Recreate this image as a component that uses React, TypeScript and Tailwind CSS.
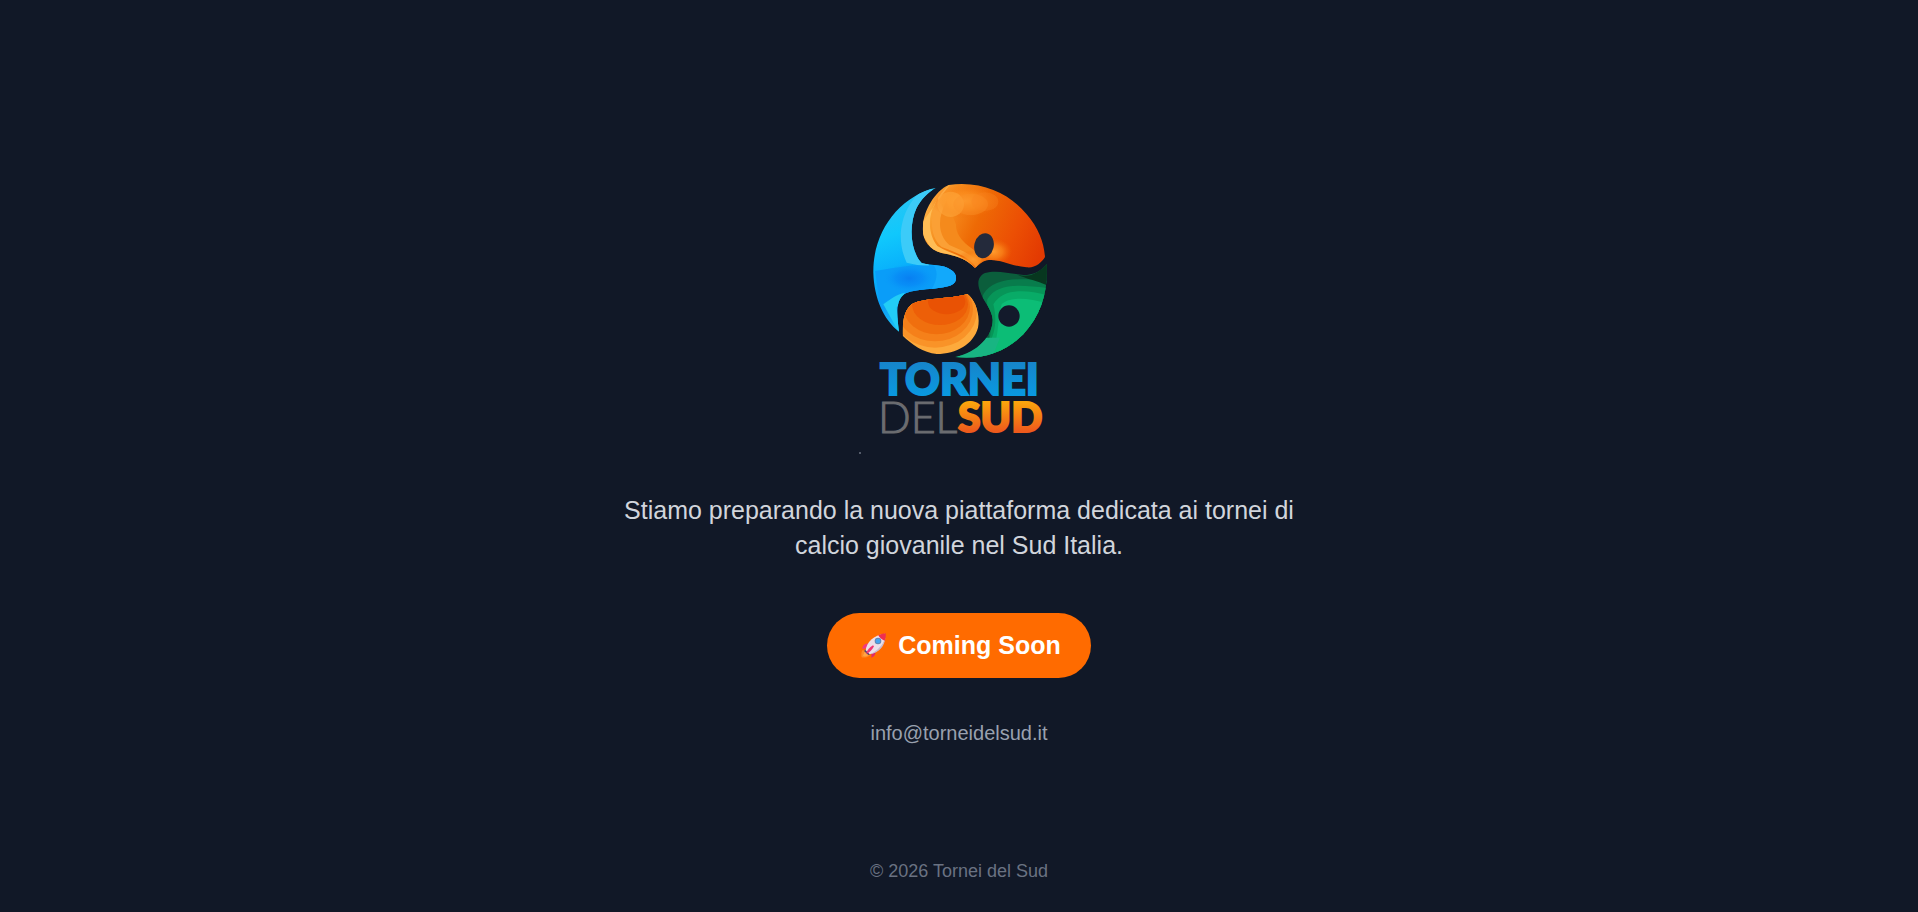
function Logo() {
  return (
    <svg
      role="img"
      aria-label="Tornei del Sud"
      viewBox="0 0 200 290"
      className="h-[290px] w-[200px]"
    >
      <defs>
        <linearGradient id="sky" x1="0.1" y1="0" x2="0.3" y2="1">
          <stop offset="0" stopColor="#35c3f0" />
          <stop offset="0.35" stopColor="#10c8fc" />
          <stop offset="0.6" stopColor="#08aefb" />
          <stop offset="0.8" stopColor="#0c9df5" />
          <stop offset="1" stopColor="#20c8f4" />
        </linearGradient>
        <linearGradient id="sunset" x1="0" y1="0.3" x2="1" y2="0.6">
          <stop offset="0" stopColor="#fdb44a" />
          <stop offset="0.2" stopColor="#f7901f" />
          <stop offset="0.45" stopColor="#ee6a05" />
          <stop offset="0.75" stopColor="#ec4f04" />
          <stop offset="1" stopColor="#e33a02" />
        </linearGradient>
        <radialGradient id="glow">
          <stop offset="0" stopColor="#ff9c2e" />
          <stop offset="0.5" stopColor="#fb8a1c" stopOpacity="0.7" />
          <stop offset="1" stopColor="#f06a08" stopOpacity="0" />
        </radialGradient>
        <radialGradient id="water">
          <stop offset="0" stopColor="#087ff2" />
          <stop offset="0.5" stopColor="#088bf6" stopOpacity="0.8" />
          <stop offset="1" stopColor="#0a9cf8" stopOpacity="0" />
        </radialGradient>
        <linearGradient id="bluetext" x1="0" y1="0" x2="0" y2="1">
          <stop offset="0" stopColor="#1a7fc4" />
          <stop offset="1" stopColor="#069ee6" />
        </linearGradient>
        <linearGradient id="orangetext" x1="0" y1="0" x2="0" y2="1">
          <stop offset="0.2" stopColor="#fba60c" />
          <stop offset="0.8" stopColor="#ee5a1c" />
        </linearGradient>
        <clipPath id="blueShape">
          <path d="M258 50C150 75 68 180 70 305C72 380 100 445 147 482C140 430 138 390 160 372C180 352 250 358 300 344C326 336 322 305 302 296C280 280 250 285 215 276C180 240 176 160 200 110C213 85 235 62 258 50Z" />
        </clipPath>
        <clipPath id="topShape">
          <path d="M296 42C400 28 480 70 530 130C565 170 582 215 585 258C575 275 555 292 530 289C480 285 450 262 410 268C395 272 385 282 375 292C350 262 310 252 275 246C235 235 215 205 219 165C220 120 255 60 296 42Z" />
        </clipPath>
        <clipPath id="greenShape">
          <path d="M590 278C575 300 550 312 520 312C480 308 440 296 405 306C385 315 380 335 390 360C398 390 425 410 428 445C430 490 385 545 315 558C400 568 470 540 520 490C575 430 595 360 590 278Z" />
        </clipPath>
        <clipPath id="bottomShape">
          <path d="M352 369C300 385 215 380 185 400C160 420 158 455 158 494C185 520 220 545 260 549C320 548 370 520 384 470C392 430 375 385 352 369Z" />
        </clipPath>
      </defs>

      <g transform="translate(-9 6) scale(0.33333)">
        <g clipPath="url(#blueShape)">
          <rect x="60" y="40" width="270" height="450" fill="url(#sky)" />
          <path d="M240 40C160 90 130 190 170 275L240 290L190 180L250 60Z" fill="#3ccbf8" />
          <path d="M75 300C110 295 160 285 200 283L330 285V350L150 370L90 400Z" fill="#0a9df8" />
          <ellipse cx="178" cy="322" rx="80" ry="44" fill="url(#water)" />
          <path d="M250 282C265 300 262 325 245 355H330V280Z" fill="#12a9fb" />
          <path d="M100 400C120 385 140 370 165 365L140 410L150 490Z" fill="#22cdf6" />
        </g>

        <g clipPath="url(#topShape)">
          <rect x="210" y="30" width="385" height="270" fill="url(#sunset)" />
          <path d="M300 40C240 90 220 170 262 225C300 250 345 250 375 292L260 260L205 170Z" fill="#ffbd55" />
          <path d="M262 80C240 130 236 195 275 228C320 246 355 255 378 290L392 270C350 235 290 215 290 130Z" fill="#fba035" />
          <path d="M290 90C262 140 262 190 298 222C335 238 362 248 387 275L400 255C350 225 318 200 318 160Z" fill="#f58a1c" />
          <ellipse cx="345" cy="90" rx="105" ry="52" fill="url(#glow)" />
          <ellipse cx="302" cy="100" rx="40" ry="38" fill="#ffab40" opacity="0.5" />
          <ellipse cx="362" cy="100" rx="52" ry="32" fill="#fb9228" opacity="0.4" />
          <ellipse cx="405" cy="92" rx="40" ry="28" fill="#f98520" opacity="0.35" />
          <ellipse cx="430" cy="242" rx="56" ry="40" fill="url(#glow)" />
          <ellipse cx="370" cy="265" rx="50" ry="28" fill="url(#glow)" />
        </g>
        <ellipse cx="402" cy="224" rx="29" ry="38" transform="rotate(14 402 224)" fill="#242a3b" />

        <g clipPath="url(#greenShape)">
          <rect x="310" y="270" width="290" height="300" fill="#0b5e3c" />
          <path d="M395 570C450 500 385 400 400 370C430 320 500 320 600 330V570Z" fill="#087c4c" />
          <path d="M370 580C460 490 405 430 412 385C440 335 510 340 600 352V570Z" fill="#079558" />
          <path d="M350 590C450 520 440 440 430 400C460 350 530 355 600 375V570Z" fill="#08ab67" />
          <path d="M420 560C450 500 440 450 455 400C480 375 540 380 600 400V570Z" fill="#0cbd76" />
          <path d="M315 558C350 545 380 530 405 500L450 500L420 575H310Z" fill="#18b582" />
          <path d="M500 310C545 325 570 300 595 270V345C565 330 530 325 500 310Z" fill="#07371f" />
        </g>
        <circle cx="477" cy="435" r="32" fill="#131a2b" />

        <g clipPath="url(#bottomShape)">
          <rect x="150" y="360" width="245" height="195" fill="#fdaa3c" />
          <ellipse cx="255" cy="420" rx="126" ry="110" fill="#f99328" />
          <ellipse cx="255" cy="415" rx="114" ry="96" fill="#f5801a" />
          <ellipse cx="260" cy="408" rx="100" ry="82" fill="#f06f0e" />
          <ellipse cx="270" cy="400" rx="84" ry="62" fill="#ed5f08" />
          <ellipse cx="290" cy="392" rx="56" ry="38" fill="#e95204" />
        </g>
      </g>

      <g className="font-['Lato',sans-serif]">
        <text
          x="21"
          y="230"
          fontSize="43"
          fontWeight="900"
          fill="url(#bluetext)"
          stroke="url(#bluetext)"
          strokeWidth="2"
        >
          TORNEI
        </text>
        <text x="19" y="268" fontSize="43" fontWeight="300" fill="#6b6c70" stroke="#6b6c70">
          DEL
        </text>
        <text
          x="99"
          y="267"
          fontSize="41"
          fontWeight="900"
          fill="url(#orangetext)"
          stroke="url(#orangetext)"
          strokeWidth="2"
        >
          SUD
        </text>
      </g>
      <circle cx="1" cy="288" r="1" fill="#6b7280" />
    </svg>
  );
}

function Rocket() {
  return (
    <svg aria-hidden="true" viewBox="0 0 75 75" className="mx-1 h-[25px] w-[25px]">
      <path d="M4 52L22 54L26 68C18 73 10 75 2 73C0 66 1 58 4 52Z" fill="#ff8a24" />
      <path d="M10 58L22 57L20 68C15 71 9 71 6 69Z" fill="#ffa545" />
      <path d="M24 32C12 30 4 38 4 48L18 45Z" fill="#f5387c" />
      <path d="M44 52C45 63 39 73 31 74L32 59Z" fill="#e12b68" />
      <path d="M12 49L28 64L22 66L10 55Z" fill="#56436a" />
      <path d="M14 52C16 28 38 6 72 2C74 34 54 57 26 64Z" fill="#ecdfe9" />
      <path d="M26 64C50 53 66 35 73 14C71 39 55 58 26 64Z" fill="#c9bbd0" />
      <path d="M52 7C60 3 67 1 74 1C75 9 74 16 71 23C63 21 55 14 52 7Z" fill="#ef2f4f" />
      <path d="M36 37C25 43 18 52 15 63C25 59 34 51 39 40Z" fill="#ef3676" />
      <circle cx="51" cy="24" r="10" fill="#6586b4" />
      <circle cx="51" cy="24" r="7" fill="#45a4ee" />
    </svg>
  );
}

export default function App() {
  return (
    <div className="grid min-h-screen grid-rows-[1fr_auto_1fr] justify-items-center bg-[#111827] px-6 text-center font-['Liberation_Sans',Arial,sans-serif]">
      <main className="row-start-2 flex flex-col items-center">
        <h1>
          <Logo />
        </h1>
        <p className="mt-[38px] max-w-[720px] text-[25px] leading-[35px] text-gray-300">
          Stiamo preparando la nuova piattaforma dedicata ai tornei di calcio giovanile nel Sud
          Italia.
        </p>
        <button
          type="button"
          className="mt-[50px] flex items-center gap-2 rounded-full bg-[#ff6b00] px-[30px] py-[15px] text-[25px] leading-[35px] font-bold text-white"
        >
          <Rocket />
          Coming Soon
        </button>
        <a href="mailto:info@torneidelsud.it" className="mt-10 text-xl leading-[30px] text-gray-400">
          info@torneidelsud.it
        </a>
      </main>
      <footer className="row-start-3 self-end pb-7 text-lg leading-[25px] text-gray-500">
        © 2026 Tornei del Sud
      </footer>
    </div>
  );
}
